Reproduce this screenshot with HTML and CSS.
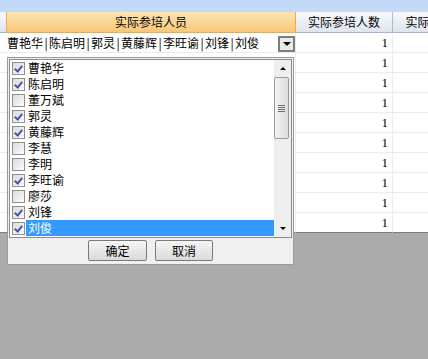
FILE: index.html
```html
<!DOCTYPE html>
<html lang="zh-CN">
<head>
    <meta charset="utf-8">
    <title>实际参培人员</title>
    <link rel="stylesheet" href="styles.css">
</head>
<body>
<div class="topBand"></div>

<div class="grid">
    <div class="headRow">
        <div class="head rowHead"></div>
        <div class="head colNames active">实际参培人员</div>
        <div class="head colCount">实际参培人数</div>
        <div class="head colMore">实际参培人次</div>
    </div>

    <div class="row">
        <div class="cell rowHead"></div>
        <div class="cell colNames combo">
            <span class="comboText">曹艳华<i>|</i>陈启明<i>|</i>郭灵<i>|</i>黄藤辉<i>|</i>李旺谕<i>|</i>刘锋<i>|</i>刘俊</span>
            <span class="comboButton"><b class="arrowDown"></b></span>
        </div>
        <div class="cell colCount">1</div>
        <div class="cell colMore"></div>
    </div>
    <div class="row"><div class="cell rowHead"></div><div class="cell colNames"></div><div class="cell colCount">1</div><div class="cell colMore"></div></div>
    <div class="row"><div class="cell rowHead"></div><div class="cell colNames"></div><div class="cell colCount">1</div><div class="cell colMore"></div></div>
    <div class="row"><div class="cell rowHead"></div><div class="cell colNames"></div><div class="cell colCount">1</div><div class="cell colMore"></div></div>
    <div class="row"><div class="cell rowHead"></div><div class="cell colNames"></div><div class="cell colCount">1</div><div class="cell colMore"></div></div>
    <div class="row"><div class="cell rowHead"></div><div class="cell colNames"></div><div class="cell colCount">1</div><div class="cell colMore"></div></div>
    <div class="row"><div class="cell rowHead"></div><div class="cell colNames"></div><div class="cell colCount">1</div><div class="cell colMore"></div></div>
    <div class="row"><div class="cell rowHead"></div><div class="cell colNames"></div><div class="cell colCount">1</div><div class="cell colMore"></div></div>
    <div class="row"><div class="cell rowHead"></div><div class="cell colNames"></div><div class="cell colCount">1</div><div class="cell colMore"></div></div>
    <div class="row last"><div class="cell rowHead"></div><div class="cell colNames"></div><div class="cell colCount">1</div><div class="cell colMore"></div></div>
</div>

<!-- liste déroulante des participants -->
<div class="popup">
    <div class="list">
        <div class="items">
            <div class="item"><span class="box checked"></span><span class="label">曹艳华</span></div>
            <div class="item"><span class="box checked"></span><span class="label">陈启明</span></div>
            <div class="item"><span class="box"></span><span class="label">董万斌</span></div>
            <div class="item"><span class="box checked"></span><span class="label">郭灵</span></div>
            <div class="item"><span class="box checked"></span><span class="label">黄藤辉</span></div>
            <div class="item"><span class="box"></span><span class="label">李慧</span></div>
            <div class="item"><span class="box"></span><span class="label">李明</span></div>
            <div class="item"><span class="box checked"></span><span class="label">李旺谕</span></div>
            <div class="item"><span class="box"></span><span class="label">廖莎</span></div>
            <div class="item"><span class="box checked"></span><span class="label">刘锋</span></div>
            <div class="item selected"><span class="box checked"></span><span class="label">刘俊</span></div>
        </div>
        <div class="scrollbar">
            <div class="scrollBtn"><b class="arrowUp"></b></div>
            <div class="thumb"><span class="grip"></span></div>
            <div class="track"></div>
            <div class="scrollBtn"><b class="arrowDownSmall"></b></div>
        </div>
    </div>
    <div class="buttons">
        <button class="btn ok">确定</button>
        <button class="btn cancel">取消</button>
    </div>
</div>
</body>
</html>
```

FILE: styles.css
```css
body {
    margin: 0;
    padding: 0;
    width: 428px;
    height: 359px;
    overflow: hidden;
    background-color: #ababab;
    font-family: "Noto Sans CJK SC", "Noto Sans", sans-serif;
    font-size: 12px;
    color: #000000;
    position: relative;
}

.topBand {
    height: 12px;
    background-color: #c3dbf8;
}

.grid {
    width: 428px;
    overflow: hidden;
    background-color: #ffffff;
}

.headRow,
.row {
    display: flex;
    white-space: nowrap;
}

.headRow {
    height: 21px;
}

.head {
    flex: none;
    box-sizing: border-box;
    height: 21px;
    line-height: 20px;
    text-align: center;
    background: linear-gradient(#f7f9fc, #dfe5ee);
    border-right: 1px solid #a9bdd8;
    border-bottom: 1px solid #9fb6d4;
    overflow: hidden;
}

.head.active {
    background: linear-gradient(#fce6b0, #f7c77a);
    border-left: 1px solid #f2a94e;
    border-right: 1px solid #f2a94e;
    border-bottom: 1px solid #f2a94e;
}

.rowHead {
    width: 6px;
}

.head.rowHead {
    border-right: none;
}

.colNames {
    width: 290px;
}

.colCount {
    width: 97px;
}

.colMore {
    width: 98px;
}

.row {
    height: 20px;
}

.cell {
    flex: none;
    box-sizing: border-box;
    height: 20px;
    line-height: 19px;
    border-right: 1px solid #ececec;
    border-bottom: 1px solid #ececec;
}

.cell.rowHead {
    border-right: none;
}

.row.last .cell {
    border-bottom-color: #7c7c7c;
}

.cell.colCount {
    text-align: right;
    padding-right: 4px;
    font-family: "Liberation Serif", serif;
    font-size: 13px;
}

.combo {
    display: flex;
    align-items: center;
    padding-left: 1px;
}

.comboText {
    flex: 1;
    overflow: hidden;
}

.comboText i {
    font-style: normal;
    display: inline-block;
    width: 6px;
    text-align: center;
}

.comboButton {
    flex: none;
    box-sizing: border-box;
    width: 17px;
    height: 16px;
    margin-top: 2px;
    border: 2px solid #7d7d7d;
    background-color: #e9e9e9;
    display: flex;
    align-items: center;
    justify-content: center;
}

.arrowDown {
    width: 0;
    height: 0;
    border-left: 4px solid transparent;
    border-right: 4px solid transparent;
    border-top: 4px solid #000000;
}

.popup {
    position: absolute;
    left: 7px;
    top: 57px;
    width: 287px;
    height: 208px;
    box-sizing: border-box;
    background-color: #f0f0f0;
    border: 1px solid #9a9a9a;
    padding: 1px;
    display: flex;
    flex-direction: column;
}

.list {
    display: flex;
    height: 179px;
    box-sizing: border-box;
    background-color: #ffffff;
    border: 1px solid #8c8c8c;
}

.items {
    flex: 1;
    padding-left: 2px;
}

.item {
    display: flex;
    align-items: center;
    height: 16px;
}

.box {
    flex: none;
    box-sizing: border-box;
    width: 13px;
    height: 13px;
    border: 1px solid #8f8f8f;
    background: linear-gradient(135deg, #dcdcdc, #fbfbfb);
    position: relative;
}

.box.checked::after {
    content: "";
    position: absolute;
    left: 3px;
    top: 1px;
    width: 3px;
    height: 6px;
    border-right: 2px solid #3f55ad;
    border-bottom: 2px solid #3f55ad;
    transform: rotate(40deg);
}

.label {
    flex: 1;
    margin-left: 1px;
    padding-left: 2px;
    height: 16px;
    line-height: 16px;
}

.item.selected .label {
    background-color: #3399ff;
    color: #ffffff;
}

.scrollbar {
    flex: none;
    width: 17px;
    display: flex;
    flex-direction: column;
    background-color: #eeeeee;
}

.scrollBtn {
    height: 17px;
    display: flex;
    align-items: center;
    justify-content: center;
}

.arrowUp {
    width: 0;
    height: 0;
    border-left: 3px solid transparent;
    border-right: 3px solid transparent;
    border-bottom: 3px solid #000000;
}

.arrowDownSmall {
    width: 0;
    height: 0;
    border-left: 3px solid transparent;
    border-right: 3px solid transparent;
    border-top: 3px solid #000000;
}

.thumb {
    height: 62px;
    box-sizing: border-box;
    margin: 0 2px 0 0;
    border: 1px solid #9a9a9a;
    border-radius: 2px;
    background: linear-gradient(90deg, #f4f4f4, #dcdcdc);
    display: flex;
    align-items: center;
    justify-content: center;
}

.grip {
    width: 7px;
    height: 7px;
    background: repeating-linear-gradient(#6e6e6e 0, #6e6e6e 1px, transparent 1px, transparent 2px);
}

.track {
    flex: 1;
}

.buttons {
    flex: 1;
    display: flex;
    justify-content: center;
    align-items: center;
    gap: 8px;
}

.btn {
    box-sizing: border-box;
    width: 59px;
    height: 21px;
    padding: 0;
    font-family: "Noto Sans CJK SC", sans-serif;
    font-size: 12px;
    color: #000000;
    border: 1px solid #7a7a7a;
    border-radius: 2px;
    background: linear-gradient(#f6f6f6, #dadada);
}

.btn.cancel {
    width: 58px;
}
```
